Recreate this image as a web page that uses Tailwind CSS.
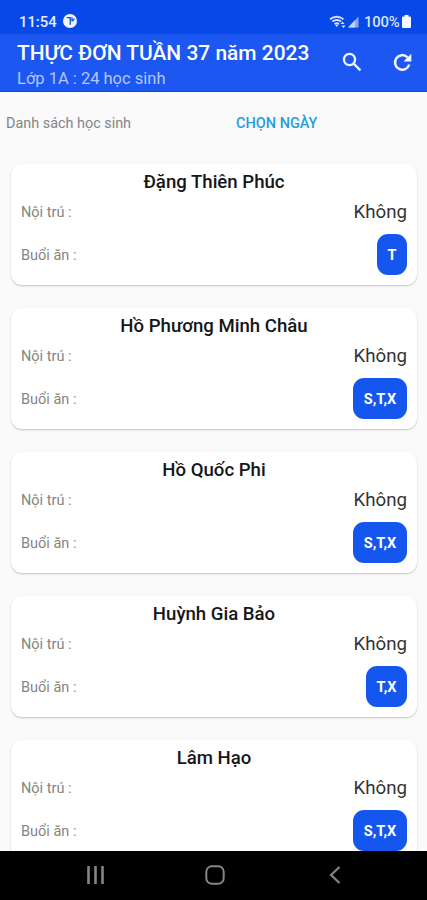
<!DOCTYPE html>
<html lang="vi">
<head>
<meta charset="utf-8">
<title>Thực đơn tuần</title>
<script src="https://cdn.jsdelivr.net/npm/@tailwindcss/browser@4"></script>
</head>
<body class="w-[427px] h-[900px] overflow-hidden bg-[#fafafa] font-[Roboto,sans-serif] flex flex-col">
<header class="shrink-0 text-white">
  <div class="h-[34px] bg-[#0748e8] flex items-center justify-between pl-[19px] pr-[16px] pt-[9px]">
    <div class="flex items-center gap-[6px]">
      <span class="text-[14.800px] leading-5 font-medium text-[#e6edff]">11:54</span>
      <svg class="w-[14px] h-[14px] -mt-px" viewBox="0 0 14 14"><circle cx="7" cy="7" r="7" fill="#f3f6ff"/><path d="M3.800 3.700h3.400v7M9 3.200v3.600q2-.3 2.200-2.300" fill="none" stroke="#0748e8" stroke-width="1.300"/></svg>
    </div>
    <div class="flex items-center">
      <svg class="w-[34px] h-[14px] -ml-px mr-px" viewBox="0 0 34 14"><g fill="none" stroke="#d5e1ff" stroke-width="1.900"><path d="M1 4.200Q7.800-.8 14.500 4.200M3.300 6.600Q7.800 3.300 12.200 6.600M5.600 9Q7.800 7.500 10 9"/></g><path d="M6 9.800h3.600L7.800 12zM13.500 6.500l2 2.500h-4zM14.500 13l-2-2.500h4z" fill="#d5e1ff"/><path d="M29.500 1.500v11H19z" fill="#87a8f6"/><path d="M26 5.200v7.300h-7z" fill="#c2d3ff"/></svg>
      <span class="text-[14.800px] leading-5 font-medium text-[#d9e4ff] w-[38px] tracking-[-0.200px] whitespace-nowrap">100%</span>
      <svg class="w-[9px] h-[13px] -mt-px" viewBox="0 0 9 13"><path d="M2.500 0h4v1.500H8q1 0 1 1V12q0 1-1 1H1q-1 0-1-1V2.500q0-1 1-1h1.500z" fill="#f5f8ff"/></svg>
    </div>
  </div>
  <div class="h-[58px] bg-[#1c57f1] border-b border-[#0b49dc] flex items-start pl-[17px]">
    <div class="w-[325px] pt-[6px] whitespace-nowrap">
      <h1 class="text-[20.930px] leading-[26px] font-medium">THỰC ĐƠN TUẦN 37 năm 2023</h1>
      <p class="text-[16.500px] leading-[25px] text-[#b3c8fb]">Lớp 1A : 24 học sinh</p>
    </div>
    <svg class="w-[20px] h-[20px] mt-[18px]" viewBox="0 0 20 20" fill="none" stroke="#f4f7ff" stroke-width="2.300"><circle cx="7.500" cy="7.500" r="5.600"/><path d="M11.600 11.600l6.800 6.800"/></svg>
    <svg class="w-[20px] h-[20px] ml-[30px] mt-[18px]" viewBox="0 0 20 20"><path d="M17.300 12.500A7.300 7.300 0 1 1 15.500 5.300" fill="none" stroke="#f4f7ff" stroke-width="2.500"/><path d="M19.300 1.800v7.800h-7.800z" fill="#f4f7ff"/></svg>
  </div>
</header>
<div class="h-[61px] shrink-0 flex items-center pl-[6px] pt-px">
  <span class="w-[230px] text-[14.400px] leading-[21px] text-[#858585]">Danh sách học sinh</span>
  <span class="text-[14.500px] leading-[21px] font-medium text-[#239fd9]">CHỌN NGÀY</span>
</div>
<main id="list" class="flex-1 min-h-0 overflow-hidden pt-[11px] pl-[11px] pr-[10px] flex flex-col gap-[23px]"></main>
<nav class="h-[49px] shrink-0 bg-black flex items-center pl-[86px] pb-[2px]">
  <svg class="w-[19px] h-[18px]" viewBox="0 0 19 18"><path d="M2.500 0v18M9.500 0v18M16.500 0v18" stroke="#858585" stroke-width="2.600"/></svg>
  <svg class="w-[20px] h-[20px] ml-[100px]" viewBox="0 0 20 20"><rect x="1.300" y="1.300" width="17.400" height="17.400" rx="5.500" fill="none" stroke="#858585" stroke-width="2"/></svg>
  <svg class="w-[14px] h-[18px] ml-[103px]" viewBox="0 0 14 18"><path d="M11.500 1L3 9l8.500 8" fill="none" stroke="#858585" stroke-width="2.200"/></svg>
</nav>
<script>
const students = [
  ['Đặng Thiên Phúc', 'T', 30],
  ['Hồ Phương Minh Châu', 'S,T,X', 54],
  ['Hồ Quốc Phi', 'S,T,X', 54],
  ['Huỳnh Gia Bảo', 'T,X', 41],
  ['Lâm Hạo', 'S,T,X', 54]
];
document.getElementById('list').innerHTML = students.map(([name, meals, w]) => `
  <section class="h-[121px] shrink-0 rounded-[11px] bg-white shadow-[0_1px_2px_rgba(0,0,0,0.22)] px-[10px] pt-[6px]">
    <h2 class="text-center text-[18.600px] leading-[24px] font-medium text-[#161616]">${name}</h2>
    <div class="h-[36px] flex items-center justify-between">
      <span class="text-[14.500px] leading-[20px] pt-[2px] text-[#858585]">Nội trú :</span>
      <span class="text-[18.700px] leading-[24px] text-[#333]">Không</span>
    </div>
    <div class="h-[49px] flex items-center justify-between">
      <span class="text-[14.500px] leading-[20px] pt-[3px] text-[#858585]">Buổi ăn :</span>
      <span class="h-[41px] rounded-[11px] bg-[#1556ee] text-white text-[14.500px] pt-[3px] font-bold flex items-center justify-center" style="width:${w}px">${meals}</span>
    </div>
  </section>`).join('');
</script>
</body>
</html>
